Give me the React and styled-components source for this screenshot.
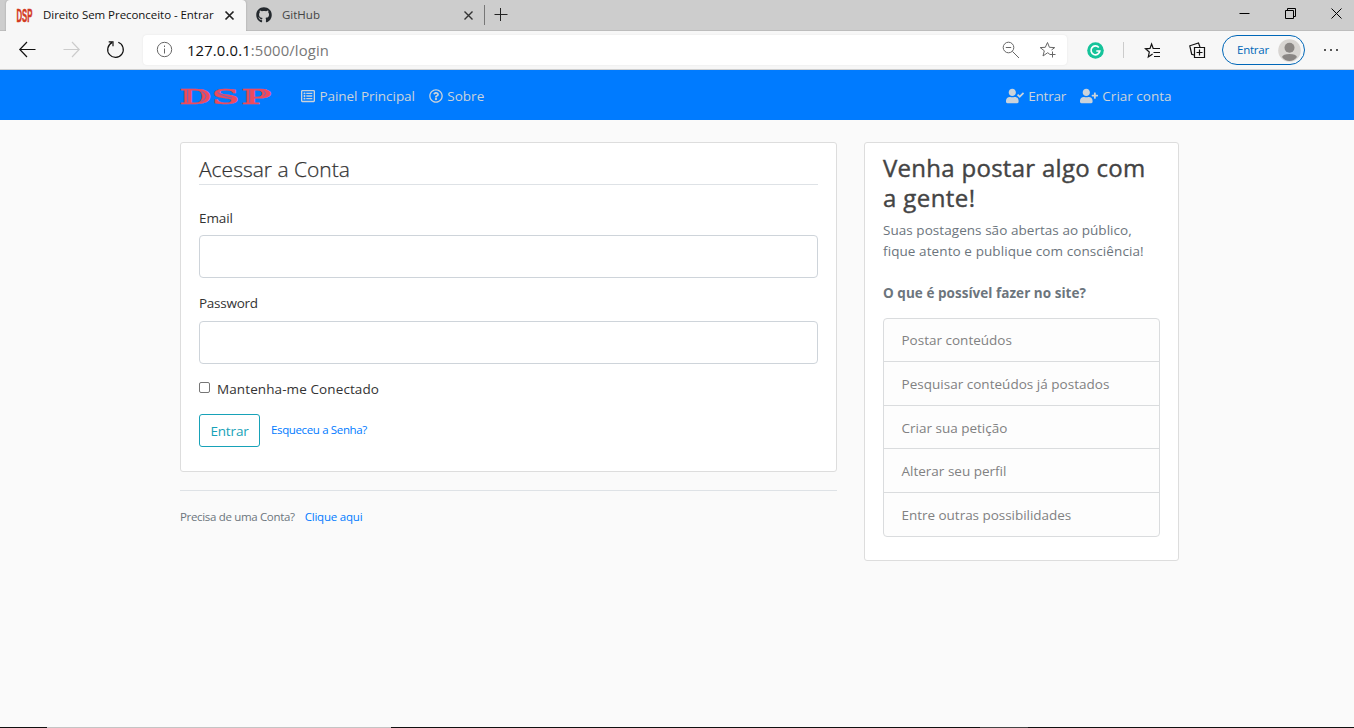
import React from "react";
import styled, { createGlobalStyle, css } from "styled-components";
import {
  FaGithub,
  FaRegListAlt,
  FaRegQuestionCircle,
  FaUserCheck,
  FaUserPlus,
} from "react-icons/fa";

const GlobalStyle = createGlobalStyle`
  *, *::before, *::after { box-sizing: border-box; }
  body {
    margin: 0;
    background: #fafafa;
    font-family: "Segoe UI", "Open Sans", "Noto Sans", sans-serif;
    font-size: 13.5px;
    overflow: hidden;
  }
  h1, h2, p, ul { margin: 0; padding: 0; font-size: inherit; font-weight: inherit; }
  a { text-decoration: none; color: inherit; }
`;

const Window = styled.div`
  display: flex;
  flex-direction: column;
  width: 1354px;
  height: 728px;
`;

const Text = styled.span`
  white-space: nowrap;
  font-size: ${(p) => p.$size || 13.5}px;
  letter-spacing: ${(p) => p.$track || 0}px;
`;

/* Browser tab strip */
const TabStrip = styled.div`
  display: flex;
  align-items: stretch;
  height: 31px;
  padding-left: 6px;
  background: #cdcdcd;
  box-shadow: inset 0 -1px 0 #bdbdbd;
`;

const Tab = styled.div`
  display: flex;
  align-items: center;
  width: ${(p) => p.$width}px;
  padding: 0 ${(p) => p.$end}px 1px 10px;
  color: ${(p) => (p.$active ? "#111" : "#444")};
  ${(p) =>
    p.$active &&
    css`
      background: #f7f7f7;
      border-radius: 4px 4px 0 0;
      box-shadow: 0 0 2px #999;
      clip-path: inset(0 -2px 0 -2px);
    `}
`;

const TabTitle = styled(Text)`
  flex: 1;
  margin-left: 10px;
  padding-bottom: 1px;
`;

const NewTab = styled.div`
  display: flex;
  align-items: center;
  height: 20px;
  margin-top: 5px;
  padding-left: 9px;
  border-left: 1px solid #777;
`;

const WindowControls = styled.div`
  display: flex;
  align-items: center;
  gap: 35px;
  margin-left: auto;
  padding: 0 12px 4px 0;
`;

/* Browser toolbar */
const Toolbar = styled.div`
  display: flex;
  align-items: center;
  height: 39px;
  padding: 0 15px 0 19px;
  background: #f7f7f7;
  border-bottom: 1px solid #cfcfcf;
`;

const NavButtons = styled.div`
  display: flex;
  gap: 27px;
  width: 124px;
  padding-bottom: 1px;
`;

const AddressBar = styled.div`
  display: flex;
  align-items: center;
  width: 924px;
  height: 30px;
  padding: 0 10px 0 14px;
  background: #fff;
  border-radius: 4px;
  box-shadow: 0 0 2px #e2e2e2;
`;

const Url = styled(Text)`
  flex: 1;
  margin-left: 14px;
  color: #777;
  b { font-weight: 400; color: #111; }
`;

const AddressActions = styled.div`
  display: flex;
  gap: 19px;
`;

const Extensions = styled.div`
  display: flex;
  align-items: center;
  margin-left: 20px;
`;

const Divider = styled.i`
  width: 1px;
  height: 16px;
  margin: 0 20px 0 19px;
  background: #ccc;
`;

const ProfileButton = styled.div`
  display: flex;
  align-items: center;
  justify-content: space-between;
  width: 83px;
  height: 30px;
  margin: 0 18px 0 15px;
  padding: 0 3px 0 14px;
  color: #0067b8;
  border: 1px solid #0067b8;
  border-radius: 15px;
  ${Text} { padding-bottom: 2px; }
`;

/* Site header */
const NavBar = styled.nav`
  display: flex;
  align-items: center;
  height: 50px;
  padding: 2px 182.5px 0 180px;
  background: #007bff;
  color: #cbd3da;
`;

const NavGroup = styled.div`
  display: flex;
  gap: 14px;
  margin-left: ${(p) => p.$start || "0"};
`;

const NavLink = styled.a`
  display: flex;
  align-items: center;
  gap: 4.4px;
`;

/* Page */
const Main = styled.main`
  display: grid;
  grid-template-columns: 657px 315px;
  column-gap: 27px;
  align-items: start;
  padding: 22px 0 0 180px;
`;

const Card = styled.section`
  padding: 0 18px ${(p) => p.$bottom}px;
  background: #fff;
  border: 1px solid #dddddd;
  border-radius: 3px;
`;

const Legend = styled.h1`
  height: 42px;
  padding-top: 10px;
  line-height: 32px;
  border-bottom: 1px solid #dee2e6;
  color: #333;
  font-weight: 300;
  margin-bottom: 23px;
  -webkit-text-stroke: 0.25px #333;
  ${Text} { display: block; line-height: 32px; }
`;

const FieldLabel = styled.label`
  display: block;
  height: 20px;
  line-height: 20px;
  margin-bottom: ${(p) => p.$gap}px;
  color: #333;
`;

const Field = styled.input`
  display: block;
  width: 100%;
  height: 43px;
  margin-bottom: 15px;
  border: 1px solid #ced4da;
  border-radius: 4px;
  background: #fff;
`;

const CheckRow = styled.label`
  display: flex;
  height: 20px;
  line-height: 20px;
  color: #333;
`;

const CheckBox = styled.input`
  appearance: none;
  width: 11px;
  height: 11px;
  margin: 3px 7px 0 0;
  border: 1px solid #767676;
  border-radius: 2px;
  background: #fff;
`;

const Actions = styled.div`
  display: flex;
  align-items: center;
  gap: 11px;
  margin-top: 15px;
  color: #007bff;
  a { padding-bottom: 4px; }
`;

const SubmitButton = styled.button`
  width: 61px;
  height: 33px;
  padding: 1px 0 0;
  background: transparent;
  border: 1px solid #17a2b8;
  border-radius: 3px;
  color: #17a2b8;
  font-family: inherit;
`;

const SignUpNote = styled.div`
  display: flex;
  gap: 10px;
  margin-top: 18px;
  padding-top: 16px;
  border-top: 1px solid #dee2e6;
  font-size: 11.5px;
  line-height: 20px;
  color: #6c757d;
  a { color: #007bff; }
`;

const SideTitle = styled.h2`
  display: flex;
  flex-direction: column;
  padding-top: 10px;
  line-height: 30px;
  font-weight: 500;
  color: #444;
  -webkit-text-stroke: 0.4px #444;
`;

const Blurb = styled.p`
  display: flex;
  flex-direction: column;
  margin: ${(p) => p.$margin};
  line-height: 21px;
  font-weight: ${(p) => p.$weight || 400};
  color: #6c757d;
`;

const FeatureList = styled.ul`
  list-style: none;
  width: 277px;
  border: 1px solid #dadcde;
  border-radius: 4px;
  background: #fdfdfd;
`;

const Feature = styled.li`
  display: flex;
  align-items: center;
  height: 44px;
  padding: 0 0 0 17.5px;
  border-bottom: 1px solid #dadcde;
  color: #818182;
  &:nth-child(odd) { height: 43px; }
  &:nth-child(3) { padding-top: 1px; }
  &:last-child { border-bottom: 0; }
`;

const TaskbarEdge = styled.footer`
  display: grid;
  grid-template-columns: 47px 344px 589px 48px 1fr;
  height: 1px;
  margin-top: auto;
  i { background: #111; }
  i:nth-child(2) { background: #c4c4c4; }
  i:nth-child(4) { background: #444; }
`;

const IconSvg = styled.svg`
  flex-shrink: 0;
  overflow: visible;
`;

const Icon = ({ w = 18, h = w, color = "#222", sw = 1.2, children }) => (
  <IconSvg width={w} height={h} viewBox={`0 0 ${w} ${h}`} fill="none" stroke={color} strokeWidth={sw}>
    {children}
  </IconSvg>
);

const Close = ({ size = 9, color = "#222", sw = 1.4 }) => (
  <Icon w={size} color={color} sw={sw}>
    <path d={`M.5 .5L${size - 0.5} ${size - 0.5}M${size - 0.5} .5L.5 ${size - 0.5}`} />
  </Icon>
);

const Favicon = () => (
  <Icon w={17} h={24} sw={0.5} color="#d33a22">
    <text transform="translate(0.4 18.8) scale(.42 1.04)" fill="#d33a22" fontFamily="Liberation Sans, sans-serif" fontWeight="700" fontSize="18.5">DSP</text>
  </Icon>
);

const Logo = () => (
  <Icon w={93} h={28} color="#ee4a5c" sw={0.3}>
    <g fill="#ee4a5c" fontFamily="DejaVu Serif, serif" fontWeight="700" fontSize="20.5">
      <text transform="translate(-.8 21.5) scale(1.8 1)">D</text>
      <text transform="translate(32 21.5) scale(1.85 1)">S</text>
      <text transform="translate(61 21.5) scale(1.98 1)">P</text>
    </g>
    <path d="M7.7 7.8V20.5M69.7 7.8V20.5M21.5 9.4Q26 11.5 26 14.3T21.5 19.5M37.5 10.4Q40.5 13.4 52 16M83.5 9Q87.5 11.5 83.5 14" stroke="#2b74ee" strokeWidth=".7" />
  </Icon>
);

const features = [
  ["Postar conteúdos", 0],
  ["Pesquisar conteúdos já postados", 0.02],
  ["Criar sua petição", 0],
  ["Alterar seu perfil", 0],
  ["Entre outras possibilidades", -0.03],
];

export default function App() {
  return (
    <Window>
      <GlobalStyle />
      <TabStrip>
        <Tab $active $width={240} $end={12}>
          <Favicon />
          <TabTitle $size={11.5} $track={-0.05}>Direito Sem Preconceito - Entrar</TabTitle>
          <Close sw={1.7} />
        </Tab>
        <Tab $width={238} $end={11}>
          <FaGithub size={16} color="#24292e" />
          <TabTitle $size={11.5}>GitHub</TabTitle>
          <Close color="#333" />
        </Tab>
        <NewTab>
          <Icon w={14} sw={1}><path d="M.5 6.5H13.5M6.5 0V13" /></Icon>
        </NewTab>
        <WindowControls>
          <Icon w={11} color="#000" sw={1}><path d="M.5 5.5H10.5" /></Icon>
          <Icon w={11} color="#000" sw={1}><path d="M.5 2.5H8.5V10.5H.5ZM2.5 2.5V.5H10.5V8.5H8.5" /></Icon>
          <Close size={11} color="#000" sw={1} />
        </WindowControls>
      </TabStrip>

      <Toolbar>
        <NavButtons>
          <Icon w={17} color="#111"><path d="M16.5 8.5H1M8 1L.8 8.5L8 16" /></Icon>
          <Icon w={17} color="#ccc"><path d="M.5 8.5H16M9 1L16.2 8.5L9 16" /></Icon>
          <Icon w={17} color="#111"><path d="M11.3 1.3A7.8 7.8 0 1 1 5 1.6M1.7 .8H6V5.2" /></Icon>
        </NavButtons>
        <AddressBar>
          <Icon w={16} color="#666" sw={1}><circle cx="7.5" cy="7.5" r="7.2" /><path d="M7.5 6.5V11.5M7.5 3.5V5" /></Icon>
          <Url $size={14.8} $track={0.15}><b>127.0.0.1</b>:5000/login</Url>
          <AddressActions>
            <Icon w={18} color="#666" sw={1}><circle cx="6.5" cy="6.5" r="5.3" /><path d="M3.8 6.5H9.2M10.4 10.4L17 17" /></Icon>
            <Icon w={18} color="#666" sw={1}><path d="M10.5 12.8L8.5 11.8L4 15L5.3 9.8L1.2 6.6L6.3 6.3L8.5 1.5L10.4 6.3L15.7 6.6L12.5 9M10.5 13.5H16.5M13.5 10.5V16.5" /></Icon>
          </AddressActions>
        </AddressBar>
        <Extensions>
          <Icon w={17} color="#fff" sw={1.7}><circle cx="8.5" cy="8.5" r="8.3" fill="#15c39a" stroke="none" /><path d="M11.8 5.5A4.4 4.4 0 1 0 12.8 9H9.3" /></Icon>
          <Divider />
          <Icon w={17} color="#111"><path d="M8.6 12L4.3 15L5.3 10L1.5 6.8L6 6.4L7.6 2L9.2 6.5H16M9.5 10.5H16M10 14.5H16" /></Icon>
          <Icon w={46} h={17} color="#111"><path d="M33.5 5.5H43.5V15.5H33.5ZM38.5 7.5V13.5M35.5 10.5H41.5M33 13L30.7 12.2L28.8 3.8L37.5 1L39 5" /></Icon>
          <ProfileButton>
            <Text $size={11.5} $track={-0.25}>Entrar</Text>
            <Icon w={23} sw={0}><circle cx="11.5" cy="11.5" r="11.3" fill="#d8d5d2" /><circle cx="11.5" cy="8.7" r="5" fill="#8a8684" /><path d="M4 18Q5 15 11.5 15T19 18Q16 22 11.5 22T4 18Z" fill="#8a8684" /></Icon>
          </ProfileButton>
          <Icon w={16} h={4} sw={0}><g fill="#222"><circle cx="2" cy="2" r="1" /><circle cx="8" cy="2" r="1" /><circle cx="14" cy="2" r="1" /></g></Icon>
        </Extensions>
      </Toolbar>

      <NavBar>
        <Logo />
        <NavGroup $start="28px">
          <NavLink><FaRegListAlt size={14} /><Text $track={-0.04}>Painel Principal</Text></NavLink>
          <NavLink><FaRegQuestionCircle size={14} /><Text>Sobre</Text></NavLink>
        </NavGroup>
        <NavGroup $start="auto">
          <NavLink><FaUserCheck size={18} /><Text $track={-0.25}>Entrar</Text></NavLink>
          <NavLink><FaUserPlus size={18} /><Text>Criar conta</Text></NavLink>
        </NavGroup>
      </NavBar>

      <Main>
        <div>
          <Card $bottom={24}>
            <Legend><Text $size={21}>Acessar a Conta</Text></Legend>
            <FieldLabel $gap={7}><Text $track={-0.1}>Email</Text></FieldLabel>
            <Field type="text" />
            <FieldLabel $gap={8}><Text $track={-0.25}>Password</Text></FieldLabel>
            <Field type="password" />
            <CheckRow><CheckBox type="checkbox" /><Text $track={0.1}>Mantenha-me Conectado</Text></CheckRow>
            <Actions>
              <SubmitButton><Text $track={-0.15}>Entrar</Text></SubmitButton>
              <a><Text $size={11.5} $track={-0.36}>Esqueceu a Senha?</Text></a>
            </Actions>
          </Card>
          <SignUpNote>
            <Text $size={11.5} $track={-0.33}>Precisa de uma Conta?</Text>
            <a><Text $size={11.5} $track={-0.2}>Clique aqui</Text></a>
          </SignUpNote>
        </div>
        <Card $bottom={23}>
          <SideTitle>
            <Text $size={24} $track={0.28}>Venha postar algo com</Text>
            <Text $size={24} $track={0.4}>a gente!</Text>
          </SideTitle>
          <Blurb $margin="7px 0 0">
            <Text $track={0.05}>Suas postagens são abertas ao público,</Text>
            <Text $track={0.09}>fique atento e publique com consciência!</Text>
          </Blurb>
          <Blurb $margin="21px 0 14px" $weight={700}>
            <Text $size={13.5} $track={0.04}>O que é possível fazer no site?</Text>
          </Blurb>
          <FeatureList>
            {features.map(([label, track]) => (
              <Feature key={label}><Text $track={track}>{label}</Text></Feature>
            ))}
          </FeatureList>
        </Card>
      </Main>
      <TaskbarEdge><i /><i /><i /><i /><i /></TaskbarEdge>
    </Window>
  );
}
